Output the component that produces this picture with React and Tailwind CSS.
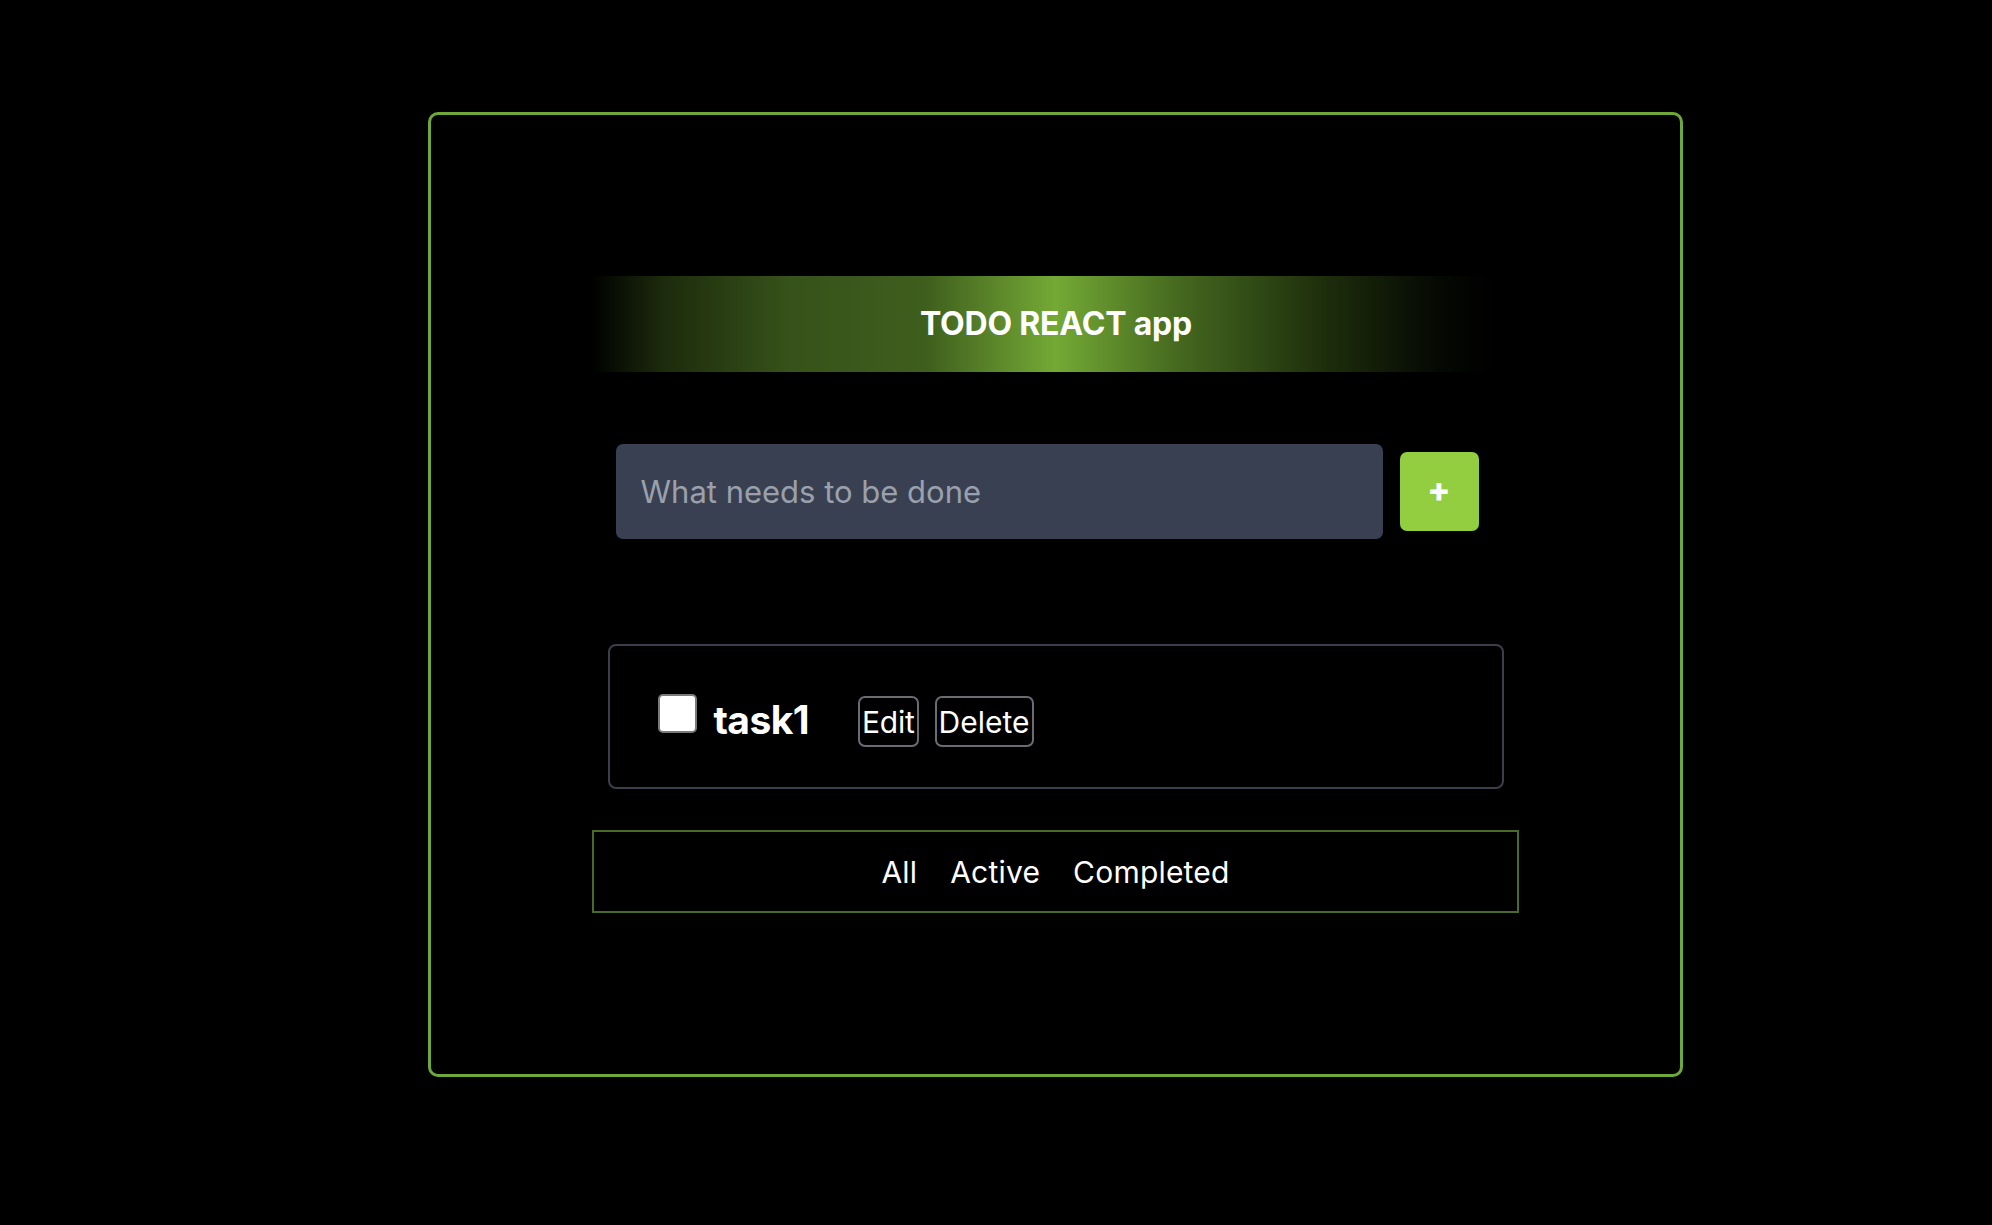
import React, { useState } from "react";

const filters = ["All", "Active", "Completed"];

export default function App() {
  const [text, setText] = useState("");
  const [done, setDone] = useState(false);

  return (
    <div className="min-h-screen w-full bg-black pt-[112px] font-['Inter',sans-serif] text-white">
      <div className="ml-[428px] w-[1255px] h-[965px] border-[3px] border-[#6ea83a] rounded-[10px] flex flex-col items-center pt-[161px]">
        {/* Header */}
        <div className="w-[902px] mr-[27px] pl-[28px] h-[96px] flex items-center justify-center bg-[linear-gradient(90deg,#000_0%,#1c2b0c_8%,#37521a_22%,#3e5e1d_37%,#74a935_51.5%,#45691f_65%,#1e2f0c_81%,#050803_94%,#000_100%)]">
          <h1 className="text-[32px] font-bold leading-none tracking-[-0.2px]">TODO REACT app</h1>
        </div>

        {/* Input row */}
        <div className="w-[896px] pl-[8px] mt-[72px] flex items-center gap-[17px]">
          <input
            value={text}
            onChange={(e) => setText(e.target.value)}
            placeholder="What needs to be done"
            className="w-[767px] h-[95px] rounded-[7px] bg-[#394051] pl-[25px] text-[31px] text-white placeholder:text-[#9aa0ac] outline-none"
          />
          <button className="w-[79px] h-[79px] rounded-[7px] bg-[#93cd40] text-white text-[34px] font-extrabold leading-none flex items-center justify-center pb-[3px]">
            +
          </button>
        </div>

        {/* Task list */}
        <div className="w-[896px] h-[145px] mt-[105px] border-2 border-[#3b3f4c] rounded-[8px]">
          <div className="flex items-start pt-[48px] pl-[48px]">
            <input
              type="checkbox"
              checked={done}
              onChange={() => setDone(!done)}
              className="appearance-none w-[39px] h-[39px] bg-white border-2 border-[#7a7a7a] rounded-[5px] shrink-0"
            />
            <span className="ml-[17px] mt-[6px] text-[39px] font-bold leading-none tracking-[-0.6px]">task1</span>
            <button className="ml-[49px] mt-[2px] h-[51px] px-[2px] border-2 border-[#6b6b73] rounded-[7px] text-[30px] leading-none tracking-[-0.2px]">
              Edit
            </button>
            <button className="ml-[16px] mt-[2px] h-[51px] px-[2px] border-2 border-[#6b6b73] rounded-[7px] text-[30px] leading-none tracking-[0px]">
              Delete
            </button>
          </div>
        </div>

        {/* Filters */}
        <div className="w-[927px] h-[83px] mt-[41px] border-2 border-[#4b6a27] flex items-center justify-center gap-[33px]">
          {filters.map((f) => (
            <button key={f} className="text-[30px] leading-none tracking-[0.2px]">
              {f}
            </button>
          ))}
        </div>
      </div>
    </div>
  );
}
